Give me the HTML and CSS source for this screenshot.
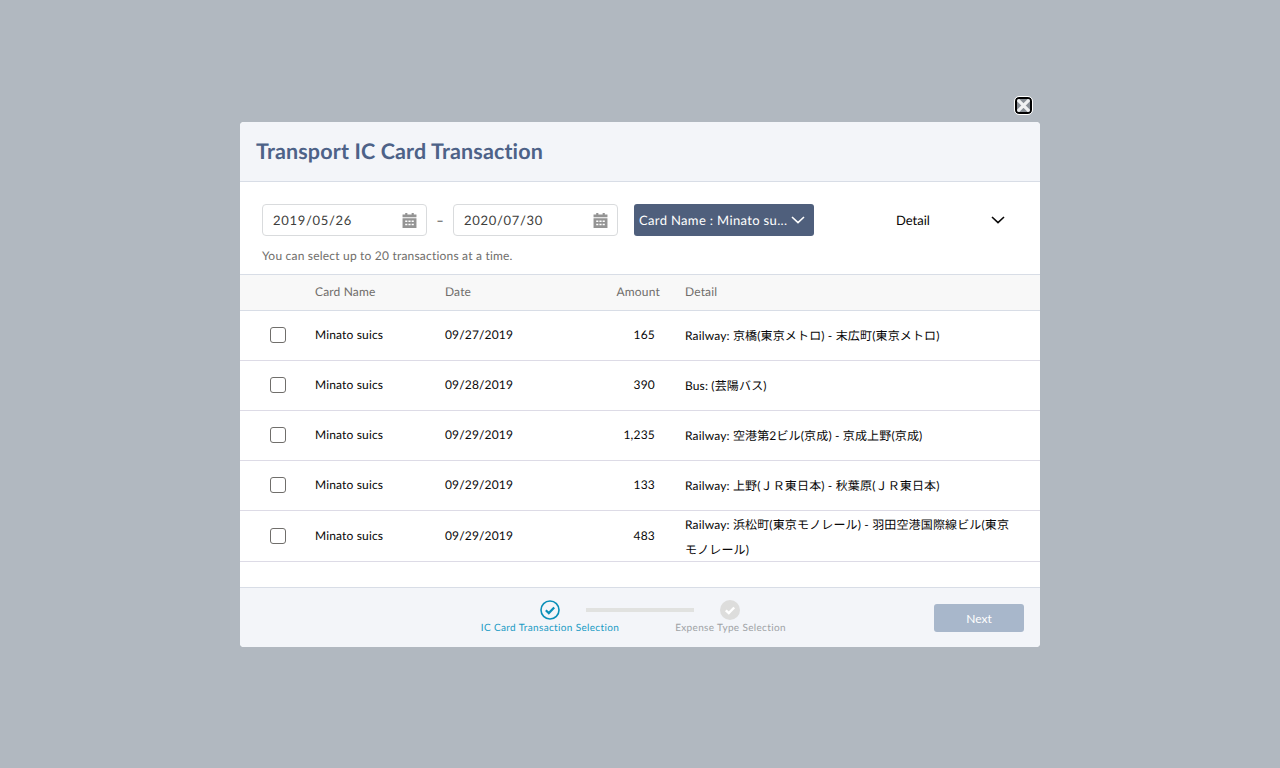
FILE: index.html
```html
<!DOCTYPE html>
<html lang="en">
<head>
<meta charset="utf-8">
<title>Transport IC Card Transaction</title>
<link rel="stylesheet" href="styles.css">
</head>
<body>
<div class="backdrop">
  <div class="modal">
    <button class="close" aria-label="Close">
      <svg viewBox="0 0 12 12" width="13" height="13"><path d="M0 0l12 12M12 0L0 12" stroke="#f0f1f2" stroke-width="3" fill="none"/></svg>
    </button>
    <header class="modal-header"><h1>Transport IC Card Transaction</h1></header>
    <section class="filters">
      <div class="filter-row">
        <div class="date-input"><span>2019/05/26</span>
          <svg class="cal" viewBox="0 0 14 14" width="15" height="15"><path d="M3 0h2v1.5h4V0h2v1.5h2.5V4H.5V1.5H3zM.5 5h13v9H.5zM3 7v1.5h2V7zm3 0v1.5h2V7zm3 0v1.5h2V7zM3 10v1.5h2V10zm3 0v1.5h2V10zm3 0v1.5h2V10z" fill="#949494" fill-rule="evenodd"/></svg>
        </div>
        <span class="dash">–</span>
        <div class="date-input"><span>2020/07/30</span>
          <svg class="cal" viewBox="0 0 14 14" width="15" height="15"><path d="M3 0h2v1.5h4V0h2v1.5h2.5V4H.5V1.5H3zM.5 5h13v9H.5zM3 7v1.5h2V7zm3 0v1.5h2V7zm3 0v1.5h2V7zM3 10v1.5h2V10zm3 0v1.5h2V10zm3 0v1.5h2V10z" fill="#949494" fill-rule="evenodd"/></svg>
        </div>
        <div class="card-filter"><span>Card Name : Minato su...</span>
          <svg viewBox="0 0 14 8" width="14" height="8"><path d="M1 1l6 5.6L13 1" stroke="#fff" stroke-width="1.6" fill="none"/></svg>
        </div>
        <div class="view-select"><span>Detail</span>
          <svg viewBox="0 0 14 8" width="14" height="8"><path d="M1 1l6 5.6L13 1" stroke="#080707" stroke-width="1.6" fill="none"/></svg>
        </div>
      </div>
      <p class="hint">You can select up to 20 transactions at a time.</p>
    </section>
    <div class="table">
      <div class="row head">
        <div class="c-check"></div><div class="c-name">Card Name</div><div class="c-date">Date</div><div class="c-amount">Amount</div><div class="c-detail head-detail">Detail</div>
      </div>
      <div class="row">
        <div class="c-check"><span class="box"></span></div><div class="c-name">Minato suics</div><div class="c-date">09/27/2019</div><div class="c-amount pad">165</div><div class="c-detail">Railway: 京橋(東京メトロ) - 末広町(東京メトロ)</div>
      </div>
      <div class="row">
        <div class="c-check"><span class="box"></span></div><div class="c-name">Minato suics</div><div class="c-date">09/28/2019</div><div class="c-amount pad">390</div><div class="c-detail">Bus: (芸陽バス)</div>
      </div>
      <div class="row">
        <div class="c-check"><span class="box"></span></div><div class="c-name">Minato suics</div><div class="c-date">09/29/2019</div><div class="c-amount pad">1,235</div><div class="c-detail">Railway: 空港第2ビル(京成) - 京成上野(京成)</div>
      </div>
      <div class="row">
        <div class="c-check"><span class="box"></span></div><div class="c-name">Minato suics</div><div class="c-date">09/29/2019</div><div class="c-amount pad">133</div><div class="c-detail">Railway: 上野(ＪＲ東日本) - 秋葉原(ＪＲ東日本)</div>
      </div>
      <div class="row tall">
        <div class="c-check"><span class="box"></span></div><div class="c-name">Minato suics</div><div class="c-date">09/29/2019</div><div class="c-amount pad">483</div><div class="c-detail">Railway: 浜松町(東京モノレール) - 羽田空港国際線ビル(東京モノレール)</div>
      </div>
    </div>
    <footer class="modal-footer">
      <div class="steps">
        <div class="step active">
          <svg viewBox="0 0 20 20" width="20" height="20"><circle cx="10" cy="10" r="9" fill="none" stroke="#0a8fb8" stroke-width="1.6"/><path d="M5.8 10.3l3 2.8 5.4-5.6" fill="none" stroke="#0a8fb8" stroke-width="2.2"/></svg>
          <span>IC Card Transaction Selection</span>
        </div>
        <div class="connector"></div>
        <div class="step done">
          <svg viewBox="0 0 20 20" width="20" height="20"><circle cx="10" cy="10" r="10" fill="#dddddc"/><path d="M5.8 10.3l3 2.8 5.4-5.6" fill="none" stroke="#fff" stroke-width="2.4"/></svg>
          <span>Expense Type Selection</span>
        </div>
      </div>
      <button class="next">Next</button>
    </footer>
  </div>
</div>
</body>
</html>
```
FILE: styles.css
```css
* { box-sizing: border-box; }
html, body { margin: 0; padding: 0; height: 100%; }
body { font-family: Lato, "Noto Sans CJK JP", sans-serif; color: #080707; text-rendering: geometricPrecision; }
.backdrop { height: 768px; background: #b1b8c0; padding-top: 122px; display: flex; justify-content: center; align-items: flex-start; overflow: hidden; }
.modal { position: relative; width: 800px; height: 525px; background: #fff; border-radius: 4px; display: flex; flex-direction: column; }
.close { position: absolute; top: -25px; right: 8px; width: 17px; height: 17px; padding: 0; background: #8a9097; border: 2px solid #000; outline: 1px solid #fff; border-radius: 4px; display: flex; align-items: center; justify-content: center; overflow: hidden; }
.close svg { flex: none; }
.modal-header { height: 60px; background: #f3f5f9; border-bottom: 1px solid #d8dde6; border-radius: 4px 4px 0 0; padding: 0 16px; display: flex; align-items: center; }
.modal-header h1 { margin: 0; font-size: 21.5px; font-weight: 700; color: #4d6288; line-height: 1; letter-spacing: .15px; }
.filters { height: 92px; padding: 22px 22px 0; }
.filter-row { display: flex; align-items: center; height: 32px; }
.date-input { width: 165px; height: 32px; border: 1px solid #d9dbdd; border-radius: 4px; padding: 0 9px 0 10px; display: flex; align-items: center; justify-content: space-between; font-size: 13px; letter-spacing: .7px; color: #3e3e3c; }
.dash { width: 26px; text-align: center; font-size: 13px; color: #3e3e3c; }
.card-filter { margin-left: 16px; width: 180px; height: 32px; background: #4f5f7c; border-radius: 3px; padding: 0 9px 0 5px; display: flex; align-items: center; justify-content: space-between; color: #fff; font-size: 13px; white-space: nowrap; letter-spacing: .35px; }
.view-select { margin-left: 82px; margin-bottom: 1px; width: 109px; display: flex; align-items: center; justify-content: space-between; font-size: 13px; }
.hint { margin: 12px 0 0; font-size: 12px; line-height: 16px; color: #706e6b; letter-spacing: .2px; }
.table { flex: 1; border-top: 1px solid #d8dde6; }
.row { display: flex; align-items: center; height: 50px; padding-bottom: 2px; border-bottom: 1px solid #dddbe6; font-size: 12px; }
.row.tall { height: 51px; padding-bottom: 1px; }
.row.head { height: 36px; background: #f8f8f8; color: #706e6b; border-bottom-color: #d8dde6; letter-spacing: .3px; }
.c-check { width: 75px; padding-left: 30px; display: flex; }
.box { width: 16px; height: 16px; border: 1px solid #706e6b; border-radius: 3px; background: #fff; }
.c-name { width: 130px; letter-spacing: .15px; }
.c-date { width: 120px; letter-spacing: .15px; }
.c-amount { width: 95px; text-align: right; letter-spacing: .2px; }
.c-amount.pad { padding-right: 5px; }
.c-detail { width: 380px; padding: 0 25px; line-height: 25px; letter-spacing: .15px; margin-top: 2px; }
.c-detail.head-detail { margin-top: 0; }
.modal-footer { position: relative; height: 60px; background: #f3f5f9; border-top: 1px solid #d8dde6; border-radius: 0 0 4px 4px; display: flex; align-items: center; justify-content: flex-end; padding-right: 16px; }
.steps { position: absolute; left: 240px; top: 12px; display: flex; align-items: flex-start; }
.step { display: flex; flex-direction: column; align-items: center; font-size: 10px; white-space: nowrap; line-height: 16px; letter-spacing: .35px; }
.step.active { width: 140px; color: #1a9bc4; }
.step.done { width: 111px; color: #a0a3a6; margin-left: -1px; }
.step.done span { margin-left: 2px; }
.connector { width: 108px; height: 4px; background: #e1e2e0; margin: 8px -19px 0 -34px; }
.next { width: 90px; height: 28px; border: 0; border-radius: 3px; background: #a8b7cb; color: #fff; font-family: inherit; font-size: 12px; margin-top: 1px; }
```
